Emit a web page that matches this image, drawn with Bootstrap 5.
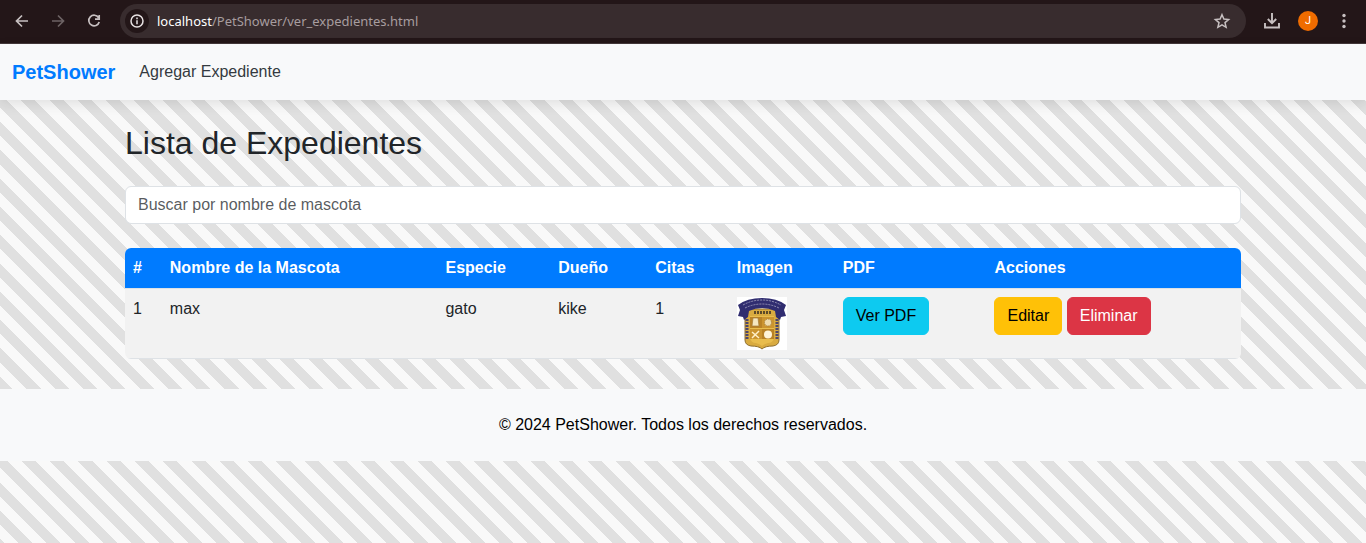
<!DOCTYPE html>
<html lang="es">
<head>
<meta charset="utf-8">
<meta name="viewport" content="width=device-width, initial-scale=1">
<title>PetShower - Lista de Expedientes</title>
<link href="https://cdn.jsdelivr.net/npm/bootstrap@5.3.0/dist/css/bootstrap.min.css" rel="stylesheet">
<style>
  body { font-family: "Liberation Sans", Arial, sans-serif; }
  .browser-bar { background: #231618; border-bottom: 1px solid #43383a; height: 44px; padding: 3px 12px 5px 12px; color: #c7c0c1; }
  .tool-btn { width: 20px; height: 20px; padding: 0; border: 0; background: none; color: inherit; display: flex; align-items: center; justify-content: center; }
  .tool-btn:disabled { color: #6d6364; }
  .nav-tools { gap: 16px; }
  .address { background: #382c2e; height: 34px; border-radius: 17px; padding: 0 14px 0 5px; font: 13px/20px "Noto Sans", "Open Sans", sans-serif; color: #a79d9f; margin: 0 16px; }
  .address strong { font-weight: 400; color: #fff; }
  .address .tool-btn { color: #c7c0c1; }
  .address .site-info { width: 24px; height: 24px; border-radius: 50%; background: #231618; color: #e8e2e3; margin-right: 8px; }
  .avatar { background: #ef6c00; color: #fff; border-radius: 50%; font: 11px/20px Roboto, sans-serif; }
  .page-area { background: repeating-linear-gradient(45deg, #f9f9f9, #f9f9f9 10px, #e0e0e0 10px, #e0e0e0 20px); background-size: 100% 417px; }
  .site-nav { box-shadow: 0 4px 12px rgba(0, 0, 0, .1); }
  .site-nav .navbar-brand { color: #007bff; font-weight: 700; }
  .site-nav .nav-link { color: #343a40; }
  .records { border-radius: 6px; overflow: hidden; background: #fff; }
  .records thead th { background: #007bff; color: #fff; }
  .crest { display: block; width: 50px; height: 53px; }
  .site-footer { color: #000; margin-top: 30px; }
</style>
</head>
<body class="d-flex flex-column min-vh-100">
<div class="browser-bar d-flex align-items-center">
  <div class="nav-tools d-flex">
    <button class="tool-btn" type="button" aria-label="Atrás"><svg width="16" height="16" viewBox="0 0 16 16" fill="none" stroke="currentColor" stroke-width="1.7"><path d="M14 8H3M8 2.500L2.500 8 8 13.500"/></svg></button>
    <button class="tool-btn" type="button" aria-label="Adelante" disabled><svg width="16" height="16" viewBox="0 0 16 16" fill="none" stroke="currentColor" stroke-width="1.700"><path d="M2 8h11M8 2.500L13.500 8 8 13.500"/></svg></button>
    <button class="tool-btn" type="button" aria-label="Recargar"><svg width="16" height="16" viewBox="0 0 16 16" fill="none" stroke="currentColor" stroke-width="1.700"><path d="M12.600 4.700A5.300 5.300 0 1 0 13.200 9M13.200 2v4.200H9"/></svg></button>
  </div>
  <div class="address d-flex align-items-center flex-grow-1">
    <button class="tool-btn site-info" type="button" aria-label="Información del sitio"><svg width="16" height="16" viewBox="0 0 16 16" fill="none" stroke="currentColor" stroke-width="1.500"><circle cx="8" cy="8" r="6"/><path d="M8 7.200v4M8 4.600v1.600"/></svg></button>
    <span class="flex-grow-1"><strong>localhost</strong>/PetShower/ver_expedientes.html</span>
    <button class="tool-btn" type="button" aria-label="Favorito"><svg width="18" height="18" viewBox="0 0 18 18" fill="none" stroke="currentColor" stroke-width="1.500"><path d="M9 2.700l1.900 4.400 4.700.4-3.600 3.100 1.100 4.700L9 12.800l-4.100 2.500L6 10.600 2.400 7.500l4.700-.4z"/></svg></button>
  </div>
  <div class="nav-tools d-flex">
    <button class="tool-btn" type="button" aria-label="Descargas"><svg width="18" height="18" viewBox="0 0 18 18" fill="none" stroke="currentColor" stroke-width="1.900"><path d="M9 1v10M4.800 7L9 11.200l4.200-4.200M2 11v4.500h14v-4.500"/></svg></button>
    <button class="tool-btn avatar" type="button">J</button>
    <button class="tool-btn" type="button" aria-label="Menú"><svg width="18" height="18" viewBox="0 0 18 18" fill="currentColor"><circle cx="9" cy="3.500" r="1.700"/><circle cx="9" cy="9" r="1.700"/><circle cx="9" cy="14.500" r="1.700"/></svg></button>
  </div>
</div>

<div class="page-area flex-grow-1">
  <nav class="navbar navbar-expand navbar-light bg-light site-nav">
    <div class="container-fluid">
      <a class="navbar-brand" href="#">PetShower</a>
      <ul class="navbar-nav me-auto">
        <li class="nav-item"><a class="nav-link" href="#">Agregar Expediente</a></li>
      </ul>
    </div>
  </nav>

  <main class="container mt-4">
    <h2 class="mb-4">Lista de Expedientes</h2>
    <input type="text" class="form-control mb-4" placeholder="Buscar por nombre de mascota" aria-label="Buscar por nombre de mascota">
    <table class="table table-striped records mb-0">
      <colgroup>
        <col style="width:3.3%"><col style="width:24.7%"><col style="width:10.1%"><col style="width:8.7%"><col style="width:7.3%"><col style="width:9.5%"><col style="width:13.6%"><col>
      </colgroup>
      <thead>
        <tr><th>#</th><th>Nombre de la Mascota</th><th>Especie</th><th>Dueño</th><th>Citas</th><th>Imagen</th><th>PDF</th><th>Acciones</th></tr>
      </thead>
      <tbody>
        <tr>
          <td>1</td><td>max</td><td>gato</td><td>kike</td><td>1</td>
          <td>
            <svg class="crest" viewBox="0 0 50 53" role="img" aria-label="Escudo">
              <path fill="#fff" d="M0 0h50v53H0z"/>
              <path fill="#d9ab40" stroke="#8f7030" d="M8 12h34v31q0 5-6 6-8 0-11 3-3-3-11-3-6-1-6-6z"/>
              <path fill="#e9bd4d" d="M13 19h24v22q-1 5-6 5-4 1-6 3-2-2-6-3-5 0-6-5z"/>
              <path fill="#b98225" d="M13 20h12v11H13zM25 32h12v10H25z"/>
              <path fill="#cb942f" d="M25 20h12v11H25zM13 32h12v10H13z"/>
              <path fill="#f5e7c0" stroke="#a37b39" stroke-width=".7" d="M16 21h5l1 8h-7z"/>
              <circle cx="31" cy="25.500" r="3.500" fill="#efdcae" stroke="#a37b39" stroke-dasharray="1 1"/>
              <circle cx="31" cy="37.500" r="4" fill="#fff4d7"/>
              <path stroke="#fff0c8" stroke-width="1.500" d="M15 41l7-7M15 35l7 6"/>
              <path stroke="#5d4a28" stroke-width="3" stroke-dasharray="2 1" d="M17 15.500h17"/>
              <path stroke="#4d466c" stroke-width="3" stroke-dasharray="2 1" d="M10 22v20M40 22v20"/>
              <path fill="#302d70" d="M1 8Q10 1 25 1t24 7l-2 5 2 6-5 1-1 3-4-3-1-6q-6-3-13-3t-13 3l-1 6-4 3-1-3-5-1 2-6z"/>
              <path fill="none" stroke="#9491b5" stroke-dasharray="2 1" d="M6 8q9-5 19-5t19 5M8 11q8-4 17-4t17 4"/>
            </svg>
          </td>
          <td><a class="btn btn-info" href="#">Ver PDF</a></td>
          <td><button type="button" class="btn btn-warning">Editar</button> <button type="button" class="btn btn-danger">Eliminar</button></td>
        </tr>
      </tbody>
    </table>
  </main>

  <footer class="site-footer bg-light text-center py-4">
    <p class="mb-0">© 2024 PetShower. Todos los derechos reservados.</p>
  </footer>
</div>
<script src="https://cdn.jsdelivr.net/npm/bootstrap@5.3.0/dist/js/bootstrap.bundle.min.js"></script>
</body>
</html>
